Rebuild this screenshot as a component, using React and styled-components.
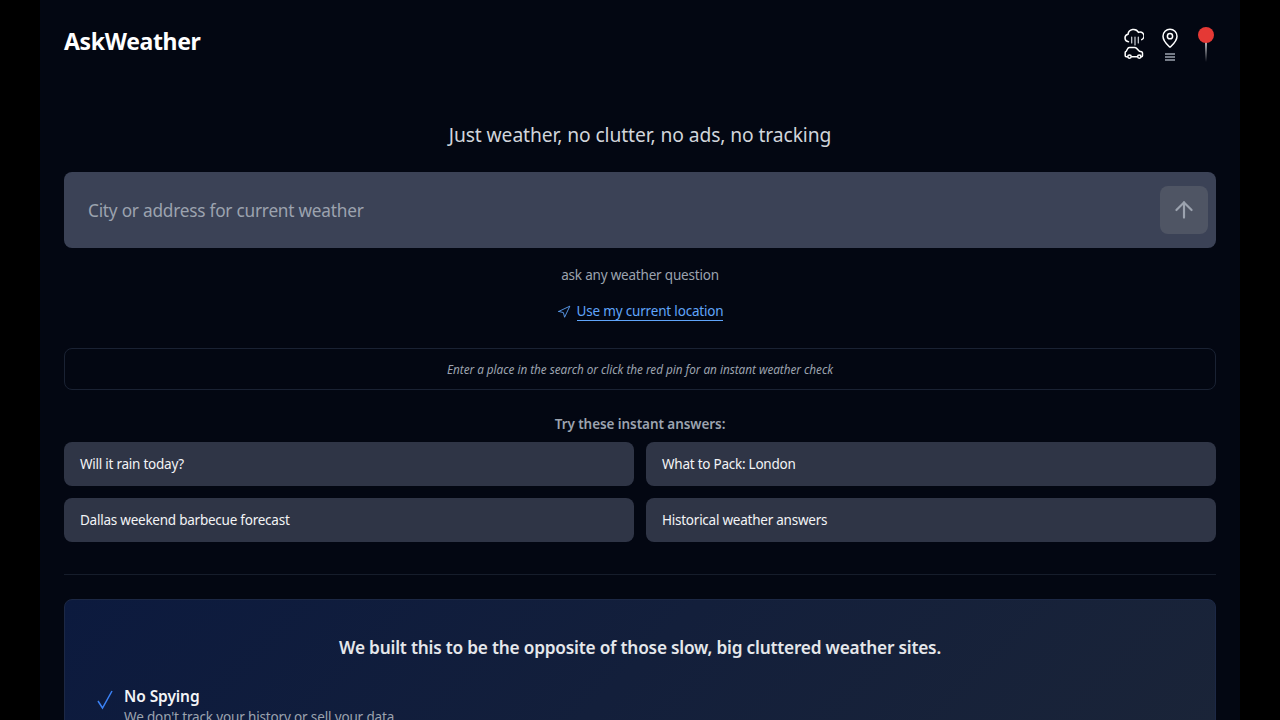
import React from 'react'
import styled, { createGlobalStyle } from 'styled-components'
import { ArrowUp, Navigation } from 'lucide-react'

const GlobalStyle = createGlobalStyle`
  html, body {
    margin: 0;
    height: 100%;
    overflow: hidden;
    background: #000;
  }
  * {
    box-sizing: border-box;
  }
`

const Page = styled.div`
  width: 1200px;
  height: 720px;
  margin: 0 auto;
  padding: 0 24px;
  overflow: hidden;
  background: #030712;
  color: #fff;
  font-family: "Noto Sans", "Open Sans", sans-serif;
`

const Header = styled.header`
  height: 84px;
  display: flex;
  align-items: center;
  justify-content: space-between;
`

const Logo = styled.h1`
  margin: 0 0 2px;
  font-size: 23px;
  line-height: 32px;
  font-weight: 700;
  letter-spacing: -0.34px;
`

const HeaderIcons = styled.div`
  display: flex;
  align-items: center;
  gap: 16px;
  margin-top: 6px;
`

const IconButton = styled.div`
  width: 20px;
  height: 36px;
  display: flex;
`

const Tagline = styled.p`
  margin: 37px 0 0;
  text-align: center;
  font-size: 19.25px;
  line-height: 28px;
  letter-spacing: -0.1px;
  color: #d1d5db;
`

const SearchBar = styled.div`
  height: 76px;
  margin-top: 23px;
  padding: 0 8px 0 24px;
  display: flex;
  align-items: center;
  justify-content: space-between;
  border-radius: 8px;
  background: #3b4256;
`

const Placeholder = styled.span`
  font-size: 17.25px;
  letter-spacing: -0.24px;
  color: #9ca3af;
`

const SendButton = styled.div`
  width: 48px;
  height: 48px;
  display: flex;
  align-items: center;
  justify-content: center;
  border-radius: 8px;
  background: #4f5564;
  color: #9ca3af;
`

const Hint = styled.p`
  margin: 17px 0 0;
  text-align: center;
  font-size: 13.5px;
  line-height: 20px;
  letter-spacing: -0.2px;
  color: #9ca3af;
`

const LocationRow = styled.div`
  margin-top: 17px;
  display: flex;
  align-items: center;
  justify-content: center;
  gap: 6px;
  color: #60a5fa;
`

const LocationLink = styled.a`
  font-size: 13.5px;
  line-height: 18px;
  letter-spacing: -0.18px;
  color: #60a5fa;
  border-bottom: 1px solid #60a5fa;
`

const Notice = styled.div`
  height: 42px;
  margin-top: 27px;
  display: flex;
  align-items: center;
  justify-content: center;
  border: 1px solid #1a2233;
  border-radius: 8px;
  font-size: 11.75px;
  font-style: italic;
  letter-spacing: -0.03px;
  color: #9ca3af;
`

const TryTitle = styled.h2`
  margin: 24px 0 0;
  text-align: center;
  font-size: 13.5px;
  line-height: 20px;
  font-weight: 600;
  letter-spacing: -0.07px;
  color: #9ca3af;
`

const AnswerGrid = styled.div`
  margin-top: 8px;
  display: grid;
  grid-template-columns: 1fr 1fr;
  gap: 12px;
`

const AnswerButton = styled.div`
  height: 44px;
  padding: 0 16px;
  display: flex;
  align-items: center;
  border-radius: 8px;
  background: #2f3546;
  font-size: 13.5px;
  letter-spacing: -0.24px;
  color: #f3f4f6;
`

const Divider = styled.hr`
  margin: 32px 0 0;
  border: 0;
  border-top: 1px solid #161d2b;
`

const InfoCard = styled.section`
  margin-top: 24px;
  padding: 34px 32px 32px;
  min-height: 240px;
  border: 1px solid #1c2845;
  border-radius: 8px;
  background: linear-gradient(135deg, #0c1a3e 0%, #1a2438 92%);
`

const InfoTitle = styled.h2`
  margin: 0;
  text-align: center;
  font-size: 17.25px;
  line-height: 28px;
  font-weight: 600;
  letter-spacing: -0.21px;
  color: #e5e7eb;
`

const FeatureRow = styled.div`
  margin-top: 24px;
  display: flex;
  gap: 11px;
`

const FeatureCheck = styled.svg`
  flex: none;
  width: 16px;
  height: 20px;
  margin-top: 4px;
`

const FeatureTitle = styled.div`
  font-size: 15.5px;
  line-height: 20px;
  font-weight: 600;
  letter-spacing: -0.08px;
  color: #f3f4f6;
`

const FeatureText = styled.div`
  margin-top: 1px;
  font-size: 13.5px;
  line-height: 20px;
  letter-spacing: -0.15px;
  color: #9ca3af;
`

const WeatherCarIcon = () => (
  <svg width="20" height="36" viewBox="0 0 20 36" fill="none" stroke="#fff" strokeWidth="1.5" strokeLinecap="round" strokeLinejoin="round">
    <path d="M4.500 14.800a3.800 3.800 0 0 1-.5-7.500A5.600 5.600 0 0 1 14.500 5.400a3.700 3.700 0 0 1 3.200 7.200" />
    <path d="M7.700 10v6M11 10v8M14.300 10v6" stroke="#d1d5db" strokeWidth="1.200" />
    <path d="M3.200 29.800H2.200a1 1 0 0 1-1-1v-3.200c0-.7.500-1.200 1.100-1.400l1.500-2.700c.4-.6 1-.9 1.700-.9h5.300c.7 0 1.300.3 1.800.8l2.800 2.900 2.100.5c.6.2 1 .7 1 1.300v2.700a1 1 0 0 1-1 1h-.7" />
    <path d="M7.800 29.800h5" />
    <circle cx="5.500" cy="29.600" r="1.700" />
    <circle cx="15.300" cy="29.600" r="1.700" />
  </svg>
)

const PlaceListIcon = () => (
  <svg width="20" height="36" viewBox="0 0 20 36" fill="none" stroke="#fff" strokeWidth="1.500" strokeLinecap="round" strokeLinejoin="round">
    <path d="M17 9.200c0 4.700-4.800 9-6.300 10.400a1 1 0 0 1-1.400 0C7.800 18.200 3 13.900 3 9.200a7 7 0 0 1 14 0" />
    <circle cx="10" cy="9.200" r="2.600" />
    <path d="M5 27h10M5 30h10M5 33h10" stroke="#9ca3af" strokeWidth="1.400" strokeLinecap="butt" />
  </svg>
)

const RedPinIcon = () => (
  <svg width="20" height="36" viewBox="0 0 20 36">
    <defs>
      <linearGradient id="needle" x1="0" y1="0" x2="0" y2="1">
        <stop offset="0" stopColor="#fff" />
        <stop offset="1" stopColor="#fff" stopOpacity="0" />
      </linearGradient>
    </defs>
    <rect x="9.250" y="14" width="1.500" height="21" fill="url(#needle)" />
    <circle cx="10" cy="8" r="8" fill="#e53935" />
  </svg>
)

const answers = [
  'Will it rain today?',
  'What to Pack: London',
  'Dallas weekend barbecue forecast',
  'Historical weather answers',
]

const App = () => {
  return (
    <Page>
      <GlobalStyle />

      <Header>
        <Logo>AskWeather</Logo>
        <HeaderIcons>
          <IconButton><WeatherCarIcon /></IconButton>
          <IconButton><PlaceListIcon /></IconButton>
          <IconButton><RedPinIcon /></IconButton>
        </HeaderIcons>
      </Header>

      <Tagline>Just weather, no clutter, no ads, no tracking</Tagline>

      <SearchBar>
        <Placeholder>City or address for current weather</Placeholder>
        <SendButton><ArrowUp size={26} strokeWidth={2} /></SendButton>
      </SearchBar>

      <Hint>ask any weather question</Hint>

      <LocationRow>
        <Navigation size={14} strokeWidth={1.5} />
        <LocationLink>Use my current location</LocationLink>
      </LocationRow>

      <Notice>Enter a place in the search or click the red pin for an instant weather check</Notice>

      <TryTitle>Try these instant answers:</TryTitle>
      <AnswerGrid>
        {answers.map(answer => (
          <AnswerButton key={answer}>{answer}</AnswerButton>
        ))}
      </AnswerGrid>

      <Divider />

      <InfoCard>
        <InfoTitle>We built this to be the opposite of those slow, big cluttered weather sites.</InfoTitle>
        <FeatureRow>
          <FeatureCheck viewBox="0 0 16 20" fill="none" stroke="#3b82f6" strokeWidth="1.500">
            <path d="M1 11l4.500 7L15 1" />
          </FeatureCheck>
          <div>
            <FeatureTitle>No Spying</FeatureTitle>
            <FeatureText>We don't track your history or sell your data.</FeatureText>
          </div>
        </FeatureRow>
      </InfoCard>
    </Page>
  )
}

export default App
